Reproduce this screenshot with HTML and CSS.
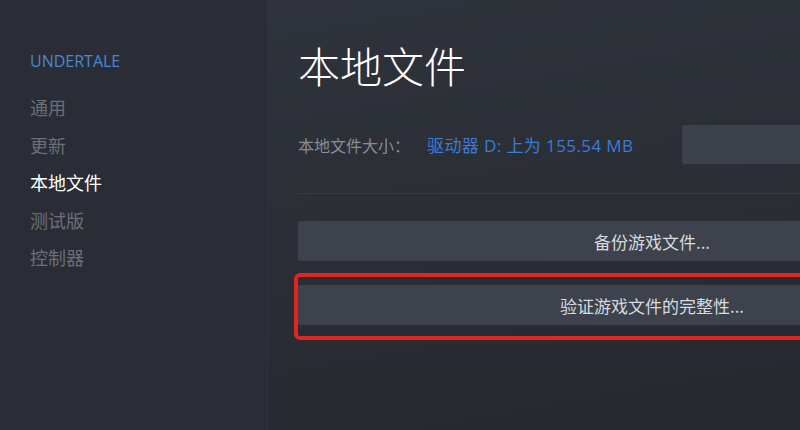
FILE: index.html
```html
<!DOCTYPE html>
<html lang="zh-CN">
<head>
  <meta charset="UTF-8" />
  <meta name="viewport" content="width=device-width, initial-scale=1.0"/>
  <title>本地文件 - UNDERTALE</title>
  <link rel="stylesheet" href="styles.css">
</head>
<body>
  <aside class="sidebar">
    <div class="game-title">UNDERTALE</div>
    <ul class="side-nav">
      <li>通用</li>
      <li>更新</li>
      <li class="active">本地文件</li>
      <li>测试版</li>
      <li>控制器</li>
    </ul>
  </aside>

  <main class="content">
    <h1>本地文件</h1>
    <div class="size-row">
      <div class="size-info">
        <span class="size-label">本地文件大小：</span>
        <span class="size-value">驱动器 D: 上为 155.54 MB</span>
      </div>
      <div class="browse-box"></div>
    </div>
    <hr class="divider">
    <button class="action">备份游戏文件...</button>
    <div class="highlight-wrap">
      <button class="action">验证游戏文件的完整性...</button>
      <div class="highlight"></div>
    </div>
  </main>
</body>
</html>
```

FILE: styles.css
```css
* {
  box-sizing: border-box;
  margin: 0;
  padding: 0;
}
html, body {
  height: 100%;
}
body {
  display: flex;
  overflow: hidden;
  font-family: "Noto Sans CJK SC", "Noto Sans", sans-serif;
  background: linear-gradient(170deg, #30343c 0%, #2a2d34 60%, #25282e 100%);
  color: #d6d8dc;
}
.sidebar {
  flex: 0 0 268px;
  background-color: #2a2d35;
  border-right: 1px solid #30333b;
  padding: 50px 0 0 30px;
}
.game-title {
  color: #4a88d4;
  font-family: "Open Sans", "Noto Sans", sans-serif;
  font-size: 16px;
  line-height: 22px;
  margin-bottom: 17px;
}
.side-nav {
  list-style: none;
}
.side-nav li {
  color: #6c6f76;
  font-size: 18px;
  line-height: 37.5px;
}
.side-nav li.active {
  color: #ffffff;
}
.content {
  flex: 0 0 708px;
  margin-left: 30px;
  padding-top: 40px;
}
.content h1 {
  font-size: 42px;
  font-weight: 300;
  color: #ffffff;
  line-height: 50px;
}
.size-row {
  display: flex;
  align-items: center;
  margin-top: 35px;
  font-size: 16px;
}
.size-info {
  flex: 0 0 384px;
  display: flex;
  align-items: baseline;
}
.size-label {
  color: #8a8d93;
  width: 129px;
}
.size-value {
  color: #3c7bd6;
  font-family: "Open Sans", "Noto Sans CJK SC", sans-serif;
  font-size: 17px;
  letter-spacing: 0.4px;
}
.browse-box {
  width: 330px;
  height: 39px;
  background-color: #3c414b;
  border-radius: 2px;
  flex-shrink: 0;
}
.divider {
  border: none;
  border-top: 1px solid #383c45;
  margin: 29px 0 27px;
  width: 100%;
}
.action {
  display: block;
  width: 708px;
  height: 40px;
  background-color: #3d424d;
  color: #d8dadd;
  border: none;
  border-radius: 2px;
  font-family: inherit;
  font-size: 17px;
}
.highlight-wrap {
  position: relative;
  margin-top: 24px;
}
.highlight {
  position: absolute;
  top: -12px;
  left: -4px;
  right: -20px;
  bottom: -15px;
  border: 4px solid #e0261f;
  border-radius: 6px;
}
```
